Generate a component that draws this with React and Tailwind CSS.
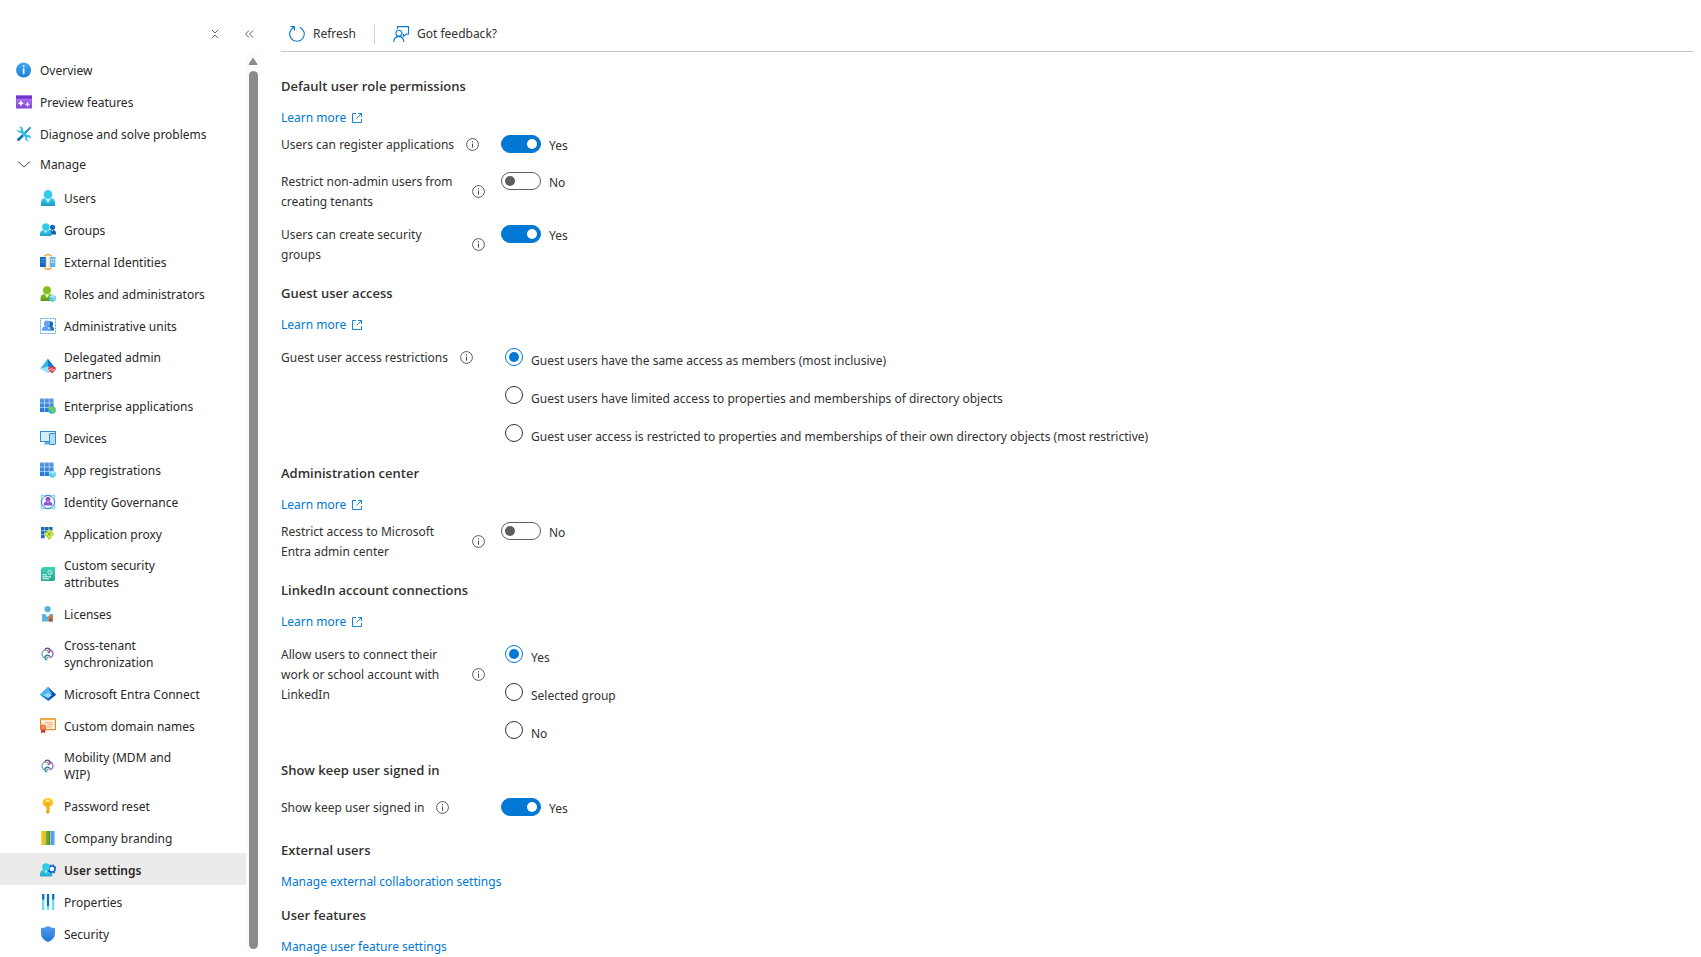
import { useState } from "react";

function Gradient({ id, from, to }) {
    return (
        <linearGradient id={id} x1="0" y1="0" x2="0" y2="1">
            <stop offset="0" stopColor={from} />
            <stop offset="1" stopColor={to} />
        </linearGradient>
    );
}

function Icon({ children }) {
    return (
        <svg viewBox="0 0 16 16" className="w-4 h-4 shrink-0" aria-hidden="true">
            {children}
        </svg>
    );
}

function OverviewIcon() {
    return (
        <Icon>
            <Gradient id="overview" from="#4aa9ee" to="#1b7fd6" />
            <circle cx="7.6" cy="8" r="7.6" fill="url(#overview)" />
            <circle cx="7.6" cy="4.3" r="1" fill="#fff" />
            <rect x="6.8" y="6.2" width="1.7" height="6" fill="#e5f3fd" />
        </Icon>
    );
}

function PreviewIcon() {
    return (
        <Icon>
            <Gradient id="preview" from="#b77af4" to="#7f45d8" />
            <rect y="1.5" width="16" height="13" rx="0.6" fill="url(#preview)" />
            <rect y="1.5" width="16" height="3.2" fill="#6f35cc" />
            <path d="M4.8 5.8 5.8 8.2 8 9.2 5.8 10.2 4.8 12.6 3.8 10.2 1.6 9.2 3.8 8.2Z" fill="#fff" />
            <path d="M11.5 7.6 12.3 9.6 14.2 10.4 12.3 11.2 11.5 13.2 10.7 11.2 8.8 10.4 10.7 9.6Z" fill="#f3e8ff" />
        </Icon>
    );
}

function DiagnoseIcon() {
    return (
        <Icon>
            <path d="M13.9.8 15.2 2 8.8 8.8 7.2 7.2Z" fill="#1490bd" />
            <path d="M6.3 8.3 8 10 3.6 14.6Q2.4 15.4 1.4 14.4T1.6 12.4Z" fill="#0f6cbd" />
            <path
                d="M1 3.2 3.2 5 4.8 4.6 5 3 3.2 1Q6.4.3 7 3.2L6.9 4.7 11.3 9.2Q14.2 8.6 15 11.2L14.8 12.8 12.8 11 11.3 11.4 11 13 13 14.9Q9.6 15.6 9.2 12.6L9.3 11.2 4.8 6.7Q1.4 7 1 3.2Z"
                fill="#2cc0e4"
            />
        </Icon>
    );
}

function UsersIcon() {
    return (
        <Icon>
            <Gradient id="users" from="#35d0ee" to="#2199c4" />
            <path d="M1 15.4V13Q1 8.6 4.6 8.3H11.4Q15 8.6 15 13V15.4Q15 16 14.4 16H1.6Q1 16 1 15.4Z" fill="url(#users)" />
            <path d="M5.5 8.4 8 13 10.5 8.4Z" fill="#e9fbff" />
            <circle cx="8" cy="4.5" r="4.4" fill="#32cbe9" />
        </Icon>
    );
}

function GroupsIcon() {
    return (
        <Icon>
            <circle cx="12.5" cy="5.3" r="2.6" fill="#0f6cbd" />
            <path d="M9 12.4V8.5Q11 7.8 13.4 8Q16 8.3 16 10.5V12.4Z" fill="#0f5fb8" />
            <path d="M11.8 8 12.5 9.8 13.2 8Z" fill="#fff" />
            <Gradient id="groups" from="#35d0ee" to="#2199c4" />
            <path d="M0 13.6V12Q0 8.4 3 8.2H8.4Q11.4 8.4 11.4 12V13.6Q11.4 14 11 14H.4Q0 14 0 13.6Z" fill="url(#groups)" />
            <path d="M4.1 8.2 5.7 11.4 7.3 8.2Z" fill="#e9fbff" />
            <circle cx="5.9" cy="4.9" r="3.7" fill="#32cbe9" />
        </Icon>
    );
}

function ExternalIcon() {
    return (
        <Icon>
            <rect x="0" y="3" width="5.8" height="10" fill="#0f6cbd" />
            <path d="M1.2 4.8H2.5V6.2H1.2ZM3.4 4.8H4.7V6.2H3.4ZM1.2 7.4H2.5V8.8H1.2ZM3.4 7.4H4.7V8.8H3.4Z" fill="#5ea0dc" />
            <rect x="9.8" y="3" width="5.6" height="10" fill="#5fb4e4" />
            <path d="M10.8 4.8H12.2V6.2H10.8ZM13 4.8H14.4V6.2H13ZM10.8 7.4H12.2V8.8H10.8ZM13 7.4H14.4V8.8H13Z" fill="#e4f5ff" />
            <path d="M4.4 2.4Q5.8.7 8 .7T11.6 2.4M4.4 13.6Q5.8 15.3 8 15.3T11.6 13.6" fill="none" stroke="#f7941d" strokeWidth="1.3" />
            <path d="M6.6 3V13M9 3V13" stroke="#f9b25c" strokeWidth=".5" />
        </Icon>
    );
}

function Cube() {
    return (
        <g>
            <path d="M12.6 8.6 16 10.4V14L12.6 16 9.2 14V10.4Z" fill="#50c7e8" />
            <path d="M12.6 8.6 16 10.4 12.6 12.2 9.2 10.4Z" fill="#a5e8f7" />
            <path d="M12.6 12.2 16 10.4V14L12.6 16Z" fill="#7bd7f0" />
        </g>
    );
}

function RolesIcon() {
    return (
        <Icon>
            <Gradient id="roles" from="#86c61e" to="#5c9412" />
            <path d="M.6 14.4V12Q.6 8.4 4 8H10Q13.6 8.4 13.6 12V15H1.2Q.6 15 .6 14.4Z" fill="url(#roles)" />
            <path d="M4.8 8 7 12 9.2 8Z" fill="#f3ffe0" />
            <circle cx="7" cy="4.3" r="4" fill="#82c11d" />
            <Cube />
        </Icon>
    );
}

function AdminUnitsIcon() {
    return (
        <Icon>
            <rect x=".5" y=".5" width="15" height="15" fill="none" stroke="#5aa9e4" strokeDasharray="2 1" />
            <circle cx="10.4" cy="6" r="2.8" fill="#1c65b4" />
            <path d="M8 12.6V8.4Q14 7 14.2 12.6Z" fill="#1c65b4" />
            <circle cx="7" cy="5.6" r="3.1" fill="#61a3ee" />
            <path d="M1.8 12.8Q2 8.4 5 8.2H8.6Q11.4 8.4 11.4 12.8Z" fill="#5f9ff0" />
            <path d="M7.8 9.4 9 11.6 9.8 9.4Z" fill="#fff" />
        </Icon>
    );
}

function DelegatedIcon() {
    return (
        <Icon>
            <path d="M7.8.8 15.4 10.4 8 14.8.4 10.4Z" fill="#35b5ea" />
            <path d="M7.8.8 15.4 10.4 8 14.8Z" fill="#1277c9" />
            <path d="M.4 10.4 8 8.6 15 10.4 8 14.8Z" fill="#9be3fa" />
            <path d="M12 15.6 8.4 12Q7.4 9.8 9.2 8.8 10.8 8.2 12 9.6 13.2 8.2 14.8 8.8 16.6 9.8 15.6 12Z" fill="#e3404d" />
            <path d="M8.4 11.6H10.6L11.6 10.2 12.6 13 13.6 11.4H15.6" fill="none" stroke="#ffc4c8" strokeWidth=".8" />
        </Icon>
    );
}

function AppGrid() {
    return (
        <g>
            <Gradient id="appgrid" from="#5a9ae8" to="#1f76d4" />
            <path
                d="M0 .6H4.2V4.8H0ZM4.7.6H8.9V4.8H4.7ZM9.4.6H13.6V4.8H9.4ZM0 5.3H4.2V9.5H0ZM4.7 5.3H8.9V9.5H4.7ZM9.4 5.3H13.6V9.5H9.4ZM0 10H4.2V14H0ZM4.7 10H8.9V14H4.7Z"
                fill="url(#appgrid)"
            />
        </g>
    );
}

function EnterpriseIcon() {
    return (
        <Icon>
            <AppGrid />
            <circle cx="12" cy="12" r="3.8" fill="#29b9d6" />
            <path d="M8.8 10Q11 7.6 13.6 9L12.6 10.8 14.6 12 13.4 15Q11.6 14 11.8 12.4L9.4 12Z" fill="#8fd12c" />
        </Icon>
    );
}

function AppRegistrationsIcon() {
    return (
        <Icon>
            <AppGrid />
            <Cube />
        </Icon>
    );
}

function DevicesIcon() {
    return (
        <Icon>
            <rect x=".5" y="1.5" width="15" height="10" fill="#d6eefb" stroke="#3787cc" />
            <path d="M5 12H9V14.4H4Z" fill="#58aee4" />
            <rect x="9.5" y="3.5" width="6" height="11" rx=".6" fill="#b3dcf8" stroke="#3787cc" />
        </Icon>
    );
}

function GovernanceIcon() {
    return (
        <Icon>
            <circle cx="8" cy="8" r="6.7" fill="none" stroke="#3b8ad8" strokeWidth="1.2" />
            <circle cx="2.5" cy="2.6" r="1.5" fill="#fff" stroke="#50c7e8" />
            <circle cx="13.5" cy="2.6" r="1.5" fill="#fff" stroke="#50c7e8" />
            <circle cx="2.5" cy="13.4" r="1.5" fill="#fff" stroke="#50c7e8" />
            <circle cx="13.5" cy="13.4" r="1.5" fill="#fff" stroke="#50c7e8" />
            <circle cx="8" cy="5.2" r="2.5" fill="#8a55cf" />
            <path d="M3.6 11.6Q3.8 7.8 6.4 7.6H9.6Q12.2 7.8 12.4 11.6Z" fill="#8a55cf" />
            <path d="M7 7.6 8 9.4 9 7.6Z" fill="#d9c4f5" />
        </Icon>
    );
}

function ProxyIcon() {
    return (
        <Icon>
            <path d="M1 1H4.6V4.6H1ZM5 1H8.6V4.6H5ZM9 1H12.6V4.6H9ZM1 5H4.6V8.6H1ZM5 5H8.6V8.6H5ZM1 9H4.6V12.2H1Z" fill="#1c6bbd" />
            <path d="M9.2 2.8 14.4 8 9.2 13.4 4 8Z" fill="#bcd631" />
            <path d="M9.2 4.8V11.4M5.8 8H12.6" stroke="#f6fbd9" strokeWidth="1" />
            <circle cx="9.2" cy="8" r="1.6" fill="#93b81c" />
            <circle cx="9.2" cy="12.4" r="1.3" fill="#bcd631" />
        </Icon>
    );
}

function AttributesIcon() {
    return (
        <Icon>
            <Gradient id="attributes" from="#3fd0b8" to="#26a98f" />
            <path d="M3 1H15V14L13.6 15H1V3Z" fill="url(#attributes)" />
            <circle cx="10" cy="6.4" r="1.9" fill="none" stroke="#d8fff6" strokeWidth="1.2" strokeDasharray="1.3 .4" />
            <path d="M2.6 8.8H6.8M2.6 10.8H11M2.6 12.8H9" stroke="#effffb" strokeWidth="1" />
        </Icon>
    );
}

function LicensesIcon() {
    return (
        <Icon>
            <circle cx="7.6" cy="3.2" r="3.1" fill="#59b4d9" />
            <path d="M2 8H5L7.6 11 10.2 8H13V15.4H2Z" fill="#59b4d9" />
            <path d="M9 11H12.4V16L10.7 15 9 16Z" fill="#c8401d" />
            <circle cx="10.7" cy="10.9" r="2" fill="#e2711d" />
        </Icon>
    );
}

function SyncIcon() {
    return (
        <Icon>
            <path d="M4.8 4A4 4 0 0 0 2 8Q2.2 11.4 5.2 11.8" fill="none" stroke="#6fb0dc" strokeWidth="1.3" />
            <path d="M10 4A4 4 0 0 1 13 8Q12.8 11.2 9.8 11.8" fill="none" stroke="#a36cc0" strokeWidth="1.3" />
            <path d="M4.8 4.4Q5.2 2.2 7.4 2.2T10 4.4 7.6 6.6" fill="none" stroke="#6b3f8c" strokeWidth="1.2" />
            <path d="M10 11.2Q9.6 9.2 7.4 9.2T5 11.6 7.4 14" fill="none" stroke="#2c74a8" strokeWidth="1.2" />
            <path d="M5.8 4.4 8.6 3V5.8ZM9.2 11.6 6.4 10.2V13Z" fill="#6fae2e" />
        </Icon>
    );
}

function EntraIcon() {
    return (
        <Icon>
            <path d="M8 1 16 8.8 8.2 15 0 8.8Z" fill="#1f7fce" />
            <path d="M8 1 12 7 8.2 11.6 0 8.8Z" fill="#49b7ee" />
            <path d="M8 1 16 8.8 8.2 15 12 7Z" fill="#0d4fa3" />
            <path d="M3.6 9.6 8.2 6.6 12 9.2 8.2 12Z" fill="#8fd9fa" />
        </Icon>
    );
}

function DomainIcon() {
    return (
        <Icon>
            <rect x=".6" y=".8" width="14.8" height="10.8" fill="#fff3e0" stroke="#e08a2c" strokeWidth="1.2" />
            <path d="M0 1.3H16" stroke="#f7a63e" strokeWidth="1.6" />
            <path d="M4.6 4.8H13M7 6.8H13M7 8.8H12" stroke="#f0a35c" strokeWidth=".9" />
            <path d="M1.2 10H5.2V15.6L3.2 14 1.2 15.6Z" fill="#c4262e" />
            <circle cx="3.2" cy="9.4" r="3" fill="#ec6d3a" />
            <circle cx="3.2" cy="9.4" r="1.4" fill="#f59a5f" />
        </Icon>
    );
}

function KeyIcon() {
    return (
        <Icon>
            <Gradient id="key" from="#ffd21c" to="#ee9c12" />
            <path d="M7.8 0Q13 .2 13 4.8 12.8 7.6 9.6 8.8V14.4L7.8 16 6 14.4V13.2L7 12.3 6 11.4 7 10.4 6 9.5V8.8Q2.8 7.6 2.6 4.8 2.6.2 7.8 0Z" fill="url(#key)" />
            <circle cx="7.8" cy="2.8" r="1.3" fill="#f7f2d8" />
            <path d="M5.4 5.6H10.2" stroke="#e8a000" strokeWidth=".9" />
        </Icon>
    );
}

function BrandingIcon() {
    return (
        <Icon>
            <rect x="1" y="1" width="4" height="14" fill="#f9b916" />
            <rect x="1" y="1" width="1.4" height="14" fill="#ffd24a" />
            <rect x="5.4" y="1" width="4.8" height="14" fill="#6fa92b" />
            <rect x="8.8" y="1" width="1.4" height="14" fill="#558b1c" />
            <rect x="10.8" y="1" width="4.2" height="14" fill="#4a9df0" />
            <rect x="13.8" y="1" width="1.2" height="14" fill="#9acbf8" />
        </Icon>
    );
}

function UserSettingsIcon() {
    return (
        <Icon>
            <Gradient id="usersettings" from="#35d0ee" to="#2aa4cd" />
            <path d="M0 14V12Q.2 8 3.4 7.8H8.6Q12 8 12.2 12V14.4H.4Z" fill="url(#usersettings)" />
            <path d="M4.2 7.8 6 11.4 7.8 7.8Z" fill="#e9fbff" />
            <circle cx="12" cy="7" r="3" fill="#eef6fc" stroke="#0f62c0" strokeWidth="1.4" />
            <circle cx="12" cy="7" r="4.1" fill="none" stroke="#0f62c0" strokeWidth="1.2" strokeDasharray="1.7 1.52" />
            <circle cx="6" cy="5" r="3.8" fill="#32cbe9" />
        </Icon>
    );
}

function PropertiesIcon() {
    return (
        <Icon>
            <path d="M3.2 0V16M8 0V16M13.2 0V16" stroke="#66d9ef" strokeWidth="2.2" />
            <path d="M3.2 0V5.6M8 0V12M13.2 0V5.6" stroke="#0f6cbd" strokeWidth="2.2" />
        </Icon>
    );
}

function ShieldIcon() {
    return (
        <Icon>
            <Gradient id="shield" from="#5a9bec" to="#1877d8" />
            <path d="M8 0Q11 2 15 2V7.4Q15 13 8 16 1 13 1 7.4V2Q5 2 8 0Z" fill="url(#shield)" />
        </Icon>
    );
}

const topItems = [
    { label: "Overview", icon: OverviewIcon },
    { label: "Preview features", icon: PreviewIcon },
    { label: "Diagnose and solve problems", icon: DiagnoseIcon },
];

const manageItems = [
    { label: "Users", icon: UsersIcon },
    { label: "Groups", icon: GroupsIcon },
    { label: "External Identities", icon: ExternalIcon },
    { label: "Roles and administrators", icon: RolesIcon },
    { label: "Administrative units", icon: AdminUnitsIcon },
    { label: "Delegated admin\npartners", icon: DelegatedIcon },
    { label: "Enterprise applications", icon: EnterpriseIcon },
    { label: "Devices", icon: DevicesIcon },
    { label: "App registrations", icon: AppRegistrationsIcon },
    { label: "Identity Governance", icon: GovernanceIcon },
    { label: "Application proxy", icon: ProxyIcon },
    { label: "Custom security\nattributes", icon: AttributesIcon },
    { label: "Licenses", icon: LicensesIcon },
    { label: "Cross-tenant\nsynchronization", icon: SyncIcon },
    { label: "Microsoft Entra Connect", icon: EntraIcon },
    { label: "Custom domain names", icon: DomainIcon },
    { label: "Mobility (MDM and\nWIP)", icon: SyncIcon },
    { label: "Password reset", icon: KeyIcon },
    { label: "Company branding", icon: BrandingIcon },
    { label: "User settings", icon: UserSettingsIcon },
    { label: "Properties", icon: PropertiesIcon },
    { label: "Security", icon: ShieldIcon },
];

function NavItem({ item, nested, active, onSelect }) {
    const ItemIcon = item.icon;
    return (
        <li>
            <a
                href="#"
                onClick={(e) => {
                    e.preventDefault();
                    onSelect(item.label);
                }}
                aria-current={active ? "page" : undefined}
                className={`flex items-center gap-2 min-h-8 pt-2 pb-[6px] leading-[17px] whitespace-pre-line ${nested ? "pl-10" : "pl-4"} ${active ? "bg-[#edebe9] font-semibold" : "hover:bg-[#f3f2f1]"}`}
            >
                <ItemIcon />
                {item.label}
            </a>
        </li>
    );
}

function Sidebar() {
    const [selected, setSelected] = useState("User settings");
    const [open, setOpen] = useState(true);

    return (
        <aside className="w-[260px] shrink-0 text-[#292827]">
            <div className="flex justify-end items-center gap-[18px] h-[53px] pt-[15px] pr-[3px]">
                <button type="button" aria-label="Collapse all" onClick={() => setOpen(false)}>
                    <svg viewBox="0 0 16 16" className="w-4 h-4" fill="none" stroke="#605e5c">
                        <path d="M5 4 8 7 11 4M5 12 8 9 11 12" />
                    </svg>
                </button>
                <button type="button" aria-label="Hide menu">
                    <svg viewBox="0 0 16 16" className="w-4 h-4" fill="none" stroke="#605e5c">
                        <path d="M8 4.5 4.5 8 8 11.5M12 4.5 8.5 8 12 11.5" />
                    </svg>
                </button>
            </div>
            <div className="flex">
                <nav className="flex-1">
                    <ul>
                        {topItems.map((item) => (
                            <NavItem key={item.label} item={item} active={item.label === selected} onSelect={setSelected} />
                        ))}
                        <li>
                            <button
                                type="button"
                                aria-expanded={open}
                                onClick={() => setOpen(!open)}
                                className="flex items-center gap-2 w-full h-8 pl-4 pb-[2px] leading-[17px]"
                            >
                                <svg viewBox="0 0 16 16" className="w-4 h-4" fill="none" stroke="#484644">
                                    <path d="M2 5.5 8 11 14 5.5" />
                                </svg>
                                Manage
                            </button>
                            {open && (
                                <ul>
                                    {manageItems.map((item) => (
                                        <NavItem key={item.label} item={item} nested active={item.label === selected} onSelect={setSelected} />
                                    ))}
                                </ul>
                            )}
                        </li>
                    </ul>
                </nav>
                <div className="flex flex-col items-center w-[14px] pt-1 bg-[#fcfcfc]" aria-hidden="true">
                    <svg viewBox="0 0 10 8" className="w-[10px] h-2 mb-[6px]">
                        <path d="M5 .5 9.4 7Q9.6 8 8.6 8H1.4Q.4 8 .6 7Z" fill="#8b8b8b" />
                    </svg>
                    <div className="w-[9px] grow rounded-full bg-[#8b8b8b]" />
                </div>
            </div>
        </aside>
    );
}

function InfoIcon() {
    return (
        <button type="button" aria-label="More information" className="shrink-0 pb-[2px]">
            <svg viewBox="0 0 13 13" className="w-[13px] h-[13px]" fill="none" stroke="#484644">
                <circle cx="6.5" cy="6.5" r="5.9" strokeWidth=".9" />
                <path d="M6.5 5.6V9.6M6.5 3.2V4.4" />
            </svg>
        </button>
    );
}

function LearnMore() {
    return (
        <a href="#" className="flex items-center gap-[6px] w-fit leading-5 text-[#0078d4]">
            Learn more
            <svg viewBox="0 0 10 10" className="w-[10px] h-[10px]" fill="none" stroke="#0078d4" strokeWidth=".9">
                <path d="M4 .5H.5V9.5H9.5V6M6 .5H9.5V4M9.5.5 4.5 5.5" />
            </svg>
        </a>
    );
}

function Section({ title, children }) {
    return (
        <section className="pt-[5px]">
            <h2 className="mb-3 text-[13px] leading-5 font-semibold font-['Open_Sans','Noto_Sans',sans-serif]">{title}</h2>
            {children}
        </section>
    );
}

function ToggleRow({ id, label, initial }) {
    const [on, setOn] = useState(initial);
    return (
        <div className="flex min-h-6 mb-[13px]">
            <div className="flex items-center gap-3 w-[220px] shrink-0 self-start">
                <label htmlFor={id} className="max-w-[179px] leading-5">{label}</label>
                <InfoIcon />
            </div>
            <div className="flex gap-2">
                <input
                    id={id}
                    type="checkbox"
                    role="switch"
                    checked={on}
                    onChange={(e) => setOn(e.target.checked)}
                    className="appearance-none flex items-center w-10 h-[18px] px-[3px] rounded-full border border-[#605e5c] bg-white before:w-[10px] before:h-[10px] before:rounded-full before:bg-[#605e5c] checked:justify-end checked:border-[#0078d4] checked:bg-[#0078d4] checked:before:bg-white"
                />
                <span className="leading-[22px]">{on ? "Yes" : "No"}</span>
            </div>
        </div>
    );
}

function RadioRow({ name, label, options }) {
    const [value, setValue] = useState(options[0]);
    return (
        <div role="radiogroup" aria-labelledby={name} className="flex mt-[13px] mb-2">
            <div className="flex items-center gap-3 w-[224px] shrink-0 self-start">
                <span id={name} className="max-w-[179px] leading-5">{label}</span>
                <InfoIcon />
            </div>
            <div className="flex flex-col gap-3">
                {options.map((option) => (
                    <label key={option} className="flex gap-2 leading-[26px]">
                        <input
                            type="radio"
                            name={name}
                            checked={value === option}
                            onChange={() => setValue(option)}
                            className="appearance-none flex items-center justify-center w-[18px] h-[18px] shrink-0 rounded-full border border-[#323130] checked:border-[#0078d4] checked:before:w-[10px] checked:before:h-[10px] checked:before:rounded-full checked:before:bg-[#0078d4]"
                        />
                        {option}
                    </label>
                ))}
            </div>
        </div>
    );
}

export default function App() {
    return (
        <div className="flex bg-white text-xs text-[#323130] font-['Noto_Sans','Open_Sans',sans-serif]">
            <Sidebar />
            <main className="flex-1 min-w-0 pl-[21px] pr-2">
                <div className="flex items-center h-[52px] pt-4 pl-2 border-b border-[#c8c6c4]">
                    <button type="button" className="flex items-center gap-2">
                        <svg viewBox="0 0 16 16" className="w-4 h-4" fill="none" stroke="#0078d4" strokeWidth="1.1">
                            <path d="M10.6 1.2A7.3 7.3 0 1 1 4.6 1.5M1.8.6H5.4V4.4" />
                        </svg>
                        Refresh
                    </button>
                    <div className="w-px h-5 mx-[18px] bg-[#d2d0ce]" />
                    <button type="button" className="flex items-center gap-2">
                        <svg viewBox="0 0 16 16" className="w-4 h-4" fill="none" stroke="#0078d4" strokeWidth="1.1">
                            <path d="M4.5 3V.6H15.5V8H13.4L10.6 10.4V8" />
                            <circle cx="5.9" cy="7.2" r="3" />
                            <path d="M.6 16Q1 10.8 5.9 10.4 10.4 10.8 11 16" />
                        </svg>
                        Got feedback?
                    </button>
                </div>

                <div className="pt-[19px]">
                    <Section title="Default user role permissions">
                        <LearnMore />
                        <div className="pt-[7px]">
                            <ToggleRow id="register-apps" label="Users can register applications" initial={true} />
                            <ToggleRow id="restrict-tenants" label="Restrict non-admin users from creating tenants" initial={false} />
                            <ToggleRow id="security-groups" label="Users can create security groups" initial={true} />
                        </div>
                    </Section>

                    <Section title="Guest user access">
                        <LearnMore />
                        <RadioRow
                            name="guest-access"
                            label="Guest user access restrictions"
                            options={[
                                "Guest users have the same access as members (most inclusive)",
                                "Guest users have limited access to properties and memberships of directory objects",
                                "Guest user access is restricted to properties and memberships of their own directory objects (most restrictive)",
                            ]}
                        />
                    </Section>

                    <Section title="Administration center">
                        <LearnMore />
                        <div className="pt-[7px]">
                            <ToggleRow id="restrict-admin-center" label="Restrict access to Microsoft Entra admin center" initial={false} />
                        </div>
                    </Section>

                    <Section title="LinkedIn account connections">
                        <LearnMore />
                        <RadioRow
                            name="linkedin"
                            label="Allow users to connect their work or school account with LinkedIn"
                            options={["Yes", "Selected group", "No"]}
                        />
                    </Section>

                    <Section title="Show keep user signed in">
                        <div className="pt-[6px]">
                            <ToggleRow id="keep-signed-in" label="Show keep user signed in" initial={true} />
                        </div>
                    </Section>

                    <Section title="External users">
                        <a href="#" className="block w-fit mb-2 leading-5 text-[#0078d4]">Manage external collaboration settings</a>
                    </Section>

                    <Section title="User features">
                        <a href="#" className="block w-fit leading-5 text-[#0078d4]">Manage user feature settings</a>
                    </Section>
                </div>
            </main>
        </div>
    );
}
